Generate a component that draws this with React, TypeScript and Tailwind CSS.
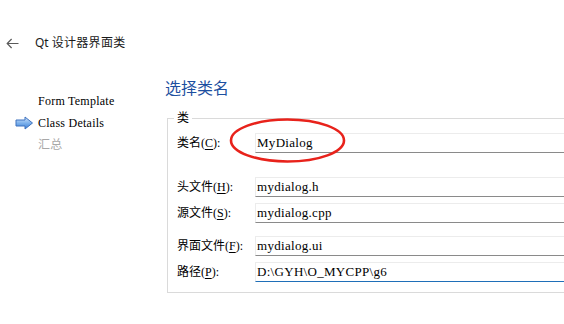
import React from "react";

const serifLbl = "font-[family-name:'Liberation_Serif','Noto_Sans_CJK_SC',serif] text-[12px]";
const serifVal = "font-[family-name:'Liberation_Serif','Noto_Sans_CJK_SC',serif] text-[13px] tracking-[0.3px]";
const side = "font-[family-name:'Liberation_Serif','Noto_Sans_CJK_SC',serif] text-[12px] tracking-[0.25px]";

function U({ c }: { c: string }) {
  return <span className="underline underline-offset-[2px]">{c}</span>;
}

function Field({
  label,
  k,
  value,
  mt,
  focused,
}: {
  label: string;
  k: string;
  value: string;
  mt: string;
  focused?: boolean;
}) {
  return (
    <div className={`flex items-center ${mt}`}>
      <div className={`w-[78px] shrink-0 text-black ${serifLbl}`}>
        {label}(<U c={k} />):
      </div>
      <div
        className={`flex h-[20px] flex-1 items-center border-t border-l border-t-[#ececec] border-l-[#ececec] border-b pl-[1px] text-black ${serifVal} ${
          focused ? "border-b-[#1f6fb8]" : "border-b-[#8a8a8a]"
        }`}
      >
        {value}
      </div>
    </div>
  );
}

export default function App() {
  return (
    <div className="relative h-[324px] w-[564px] overflow-hidden bg-white">
      {/* header */}
      <div className="flex h-[70px] items-start pt-[34px]">
        <div className="flex h-[18px] w-[35px] items-center pl-[6px]">
          <svg width="13" height="11" viewBox="0 0 13 11" fill="none">
            <path d="M12.5 5.5H1.2M5.6 1L1.2 5.5L5.6 10" stroke="#5a5a5a" strokeWidth="1.2" />
          </svg>
        </div>
        <div className="flex h-[18px] items-center font-[family-name:'Noto_Sans','Noto_Sans_CJK_SC',sans-serif] text-[12px] text-[#1a1a1a]">
          <span className="mr-[3px]">Qt</span>
          <span className="tracking-[0.3px]">设计器界面类</span>
        </div>
      </div>

      {/* body */}
      <div className="flex">
        {/* sidebar */}
        <div className="w-[165px] shrink-0 pt-[20px]">
          <div className="flex h-[22px] items-center">
            <div className="w-[38px] shrink-0" />
            <span className={`text-black ${side}`}>Form Template</span>
          </div>
          <div className="flex h-[22px] items-center">
            <div className="flex w-[38px] shrink-0 justify-start pl-[15px]">
              <svg width="19" height="14" viewBox="0 0 19 14">
                <defs>
                  <linearGradient id="ag" x1="0" y1="0" x2="0" y2="1">
                    <stop offset="0" stopColor="#cfe4fb" />
                    <stop offset="0.5" stopColor="#7fb2ec" />
                    <stop offset="1" stopColor="#3b7fd6" />
                  </linearGradient>
                </defs>
                <polygon
                  points="1,4 10,4 10,1 17.5,7 10,13 10,10 1,10"
                  fill="url(#ag)"
                  stroke="#3f73bf"
                  strokeWidth="1"
                  strokeLinejoin="round"
                />
              </svg>
            </div>
            <span className={`text-black ${side}`}>Class Details</span>
          </div>
          <div className="flex h-[22px] items-center">
            <div className="w-[38px] shrink-0" />
            <span className={`text-[#a8a8a8] ${side}`}>汇总</span>
          </div>
        </div>

        {/* content */}
        <div className="flex-1 pt-[7px]">
          <div className="h-[20px] font-[family-name:'Noto_Sans_CJK_SC',sans-serif] text-[16px] leading-[20px] text-[#1d4fa0]">
            选择类名
          </div>
          <div className="relative ml-[2px] mt-[21px] w-[420px] border border-[#dadada] pb-[10px] pl-[9px] pt-[14px]">
            <div
              className={`absolute left-[6px] top-[-9px] bg-white px-[3px] leading-[16px] text-black ${serifLbl}`}
            >
              类
            </div>
            <Field label="类名" k="C" value="MyDialog" mt="mt-0" />
            <Field label="头文件" k="H" value="mydialog.h" mt="mt-[24px]" />
            <Field label="源文件" k="S" value="mydialog.cpp" mt="mt-[6px]" />
            <Field label="界面文件" k="F" value="mydialog.ui" mt="mt-[13px]" />
            <Field label="路径" k="P" value="D:\GYH\O_MYCPP\g6" mt="mt-[6px]" focused />
          </div>
        </div>
      </div>

      {/* red annotation ellipse */}
      <svg
        className="pointer-events-none absolute left-[229px] top-[118px]"
        width="117"
        height="46"
        viewBox="0 0 117 46"
      >
        <ellipse cx="58.5" cy="22.5" rx="56.5" ry="21" fill="none" stroke="#e8221b" strokeWidth="2.6" />
      </svg>
    </div>
  );
}
